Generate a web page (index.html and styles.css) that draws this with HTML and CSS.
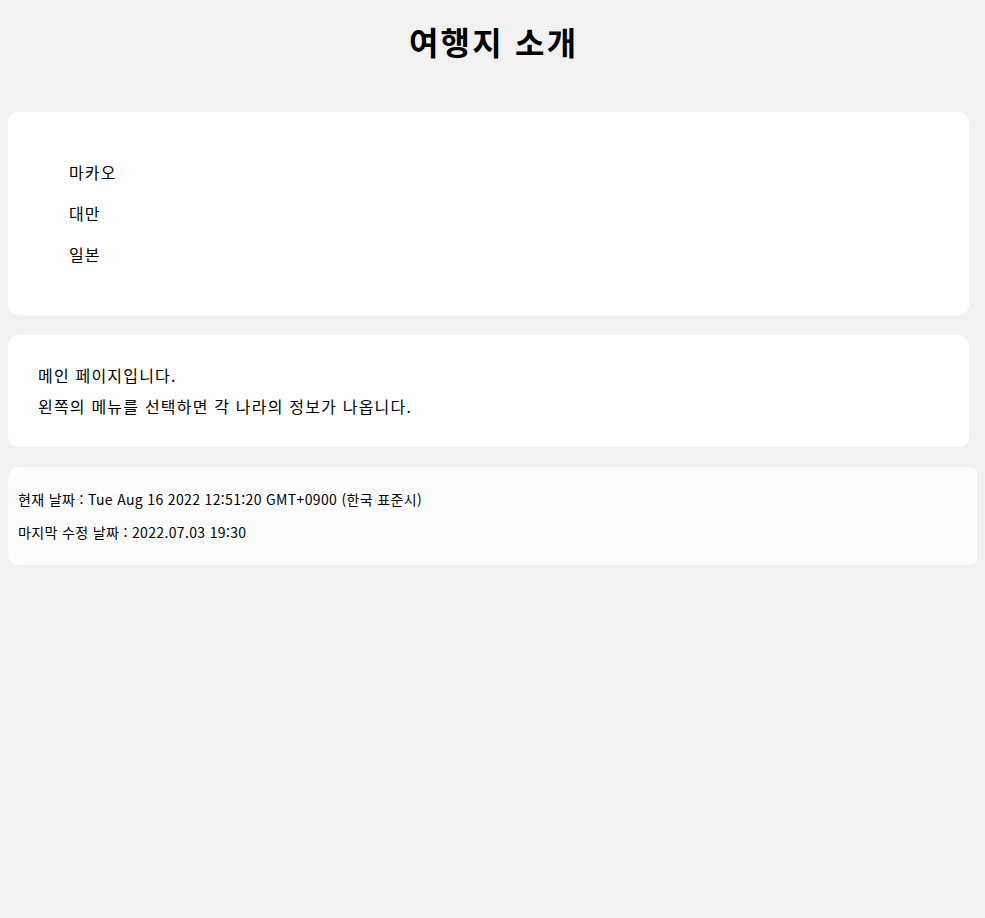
FILE: index.html
```html
<!DOCTYPE html>
<html lang="ko">
<head>
<meta charset="utf-8">
<title>여행지 소개</title>
<link rel="stylesheet" href="styles.css">
</head>
<body>
<h1 class="title">여행지 소개</h1>
<div class="box menu">
  <ul class="menu-list">
    <li>마카오</li>
    <li>대만</li>
    <li>일본</li>
  </ul>
</div>
<div class="box intro">
  <p>메인 페이지입니다.</p>
  <p>왼쪽의 메뉴를 선택하면 각 나라의 정보가 나옵니다.</p>
</div>
<div class="box info">
  <p>현재 날짜 : Tue Aug 16 2022 12:51:20 GMT+0900 (한국 표준시)</p>
  <p>마지막 수정 날짜 : 2022.07.03 19:30</p>
</div>
</body>
</html>
```
FILE: styles.css
```css
html, body {
  background: #f1f1f1;
}
body {
  margin: 8px;
  font-family: "Noto Sans CJK KR", "Noto Sans", sans-serif;
  color: #000;
}
.title {
  margin: 13px 0 51px;
  font-size: 32px;
  line-height: 40px;
  font-weight: 700;
  text-align: center;
  letter-spacing: 2.2px;
  text-indent: 2.2px;
}
.box {
  background: #fff;
  border-radius: 10px;
  margin-bottom: 20px;
  box-sizing: border-box;
}
.box p {
  margin: 0;
}
.menu {
  width: 961px;
  padding: 40px 20px;
}
.menu-list {
  list-style: none;
  margin: 0;
  padding-left: 41px;
  font-size: 16px;
  letter-spacing: 1.1px;
}
.menu-list li {
  line-height: 41px;
}
.intro {
  width: 961px;
  padding: 25px 30px;
  font-size: 16px;
  line-height: 31px;
  letter-spacing: 1.2px;
}
.info {
  width: 971px;
  padding: 16px 10px;
  font-size: 14px;
  line-height: 33px;
  letter-spacing: 0.35px;
  background: #fdfdfd;
}
```
